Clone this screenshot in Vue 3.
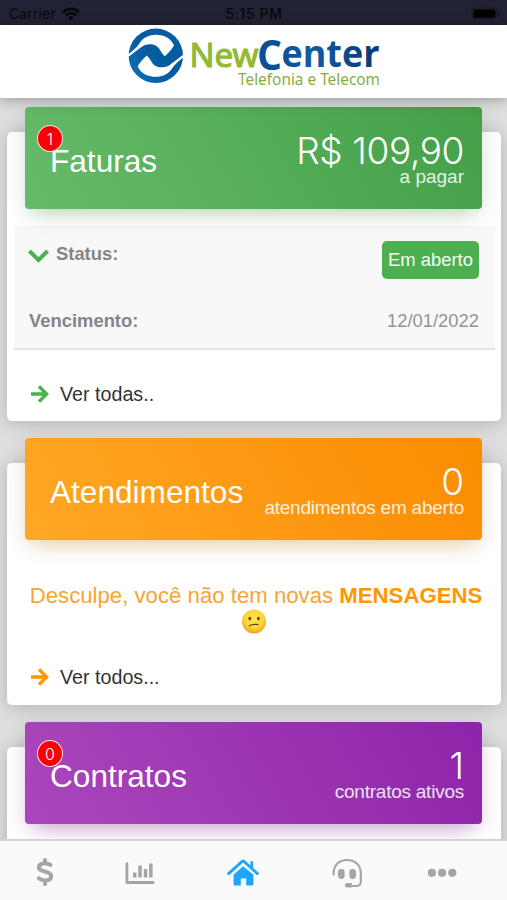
<template>
  <div class="screen">
    <div class="statusbar">
      <div class="carrier">
        <span>Carrier</span>
        <svg width="18" height="14" viewBox="0 0 18 14">
          <path d="M1 5.2a11.4 11.4 0 0 1 16 0" fill="none" stroke="#07070c" stroke-width="2.7" />
          <path d="M3.9 8.4a7.3 7.3 0 0 1 10.2 0" fill="none" stroke="#07070c" stroke-width="2.5" />
          <path d="M9 13.4 6.2 10.6a4 4 0 0 1 5.6 0z" fill="#07070c" />
        </svg>
      </div>
      <span class="time">5:15 PM</span>
      <svg class="battery" width="30" height="14" viewBox="0 0 30 14">
        <rect x="1" y="1" width="25" height="11" rx="3" fill="none" stroke="#14141f" />
        <rect x="2.5" y="2.4" width="22" height="8.3" rx="1.6" fill="#000" />
        <path d="M27.5 4.6v4q1.4-.6 1.4-2t-1.4-2z" fill="#14141f" />
      </svg>
    </div>

    <header class="header">
      <svg class="logo" width="260" height="72" viewBox="124 25 260 72">
        <defs>
          <linearGradient id="globe" x1="0" y1="1" x2="1" y2="0">
            <stop offset="0" stop-color="#0d74bb" />
            <stop offset="0.5" stop-color="#045b9f" />
            <stop offset="1" stop-color="#0a5ca2" />
          </linearGradient>
          <linearGradient id="center" x1="0" y1="0" x2="1" y2="0">
            <stop offset="0" stop-color="#0b4f93" />
            <stop offset="0.3" stop-color="#0f5ea6" />
            <stop offset="1" stop-color="#0b3876" />
          </linearGradient>
          <path
            id="swoosh"
            d="M128 54.6C133 50.6 137 47 139.4 43.4C143 37.6 149 34.8 156 34.8C164.4 34.8 171.4 38.8 174 45.4C171.4 49.4 168.6 53 164.8 56.2C161.4 53.4 160 48.4 156.8 46.2C152.6 43.4 146.4 43.8 142.2 46.4C137.6 49.6 133 53.4 128 57Z"
            fill="#fff"
          />
        </defs>
        <circle cx="155.8" cy="55.8" r="27.2" fill="url(#globe)" />
        <use href="#swoosh" />
        <use href="#swoosh" transform="rotate(180 155.8 55.8)" />
        <text class="logo-new" x="189.5" y="67.4" textLength="69" lengthAdjust="spacingAndGlyphs">New</text>
        <text class="logo-c" x="257" y="69.8" textLength="25" lengthAdjust="spacingAndGlyphs">C</text>
        <text class="logo-enter" x="281.5" y="67.4" textLength="98" lengthAdjust="spacingAndGlyphs">enter</text>
        <text class="logo-sub" x="238" y="85.3" textLength="142" lengthAdjust="spacingAndGlyphs">Telefonia e Telecom</text>
      </svg>
    </header>

    <main class="content">
      <section class="card">
        <div class="banner green">
          <span class="badge">1</span>
          <h2>Faturas</h2>
          <div class="summary">
            <strong class="money">R$ 109,90</strong>
            <small>a pagar</small>
          </div>
        </div>
        <div class="invoice">
          <div class="row">
            <div class="label">
              <svg width="21" height="14" viewBox="0 0 21 14">
                <path d="M1.4 2 10.5 11l9.1-9" fill="none" stroke="#4caf50" stroke-width="4" />
              </svg>
              <span>Status:</span>
            </div>
            <span class="tag">Em aberto</span>
          </div>
          <div class="row">
            <span class="due">Vencimento:</span>
            <span class="date">12/01/2022</span>
          </div>
        </div>
        <a class="more more-green">
          <svg width="18" height="18" viewBox="0 0 18 18">
            <path d="M0 9h15M8 1.4 15.6 9 8 16.6" fill="none" stroke="currentColor" stroke-width="3.4" />
          </svg>
          <span>Ver todas..</span>
        </a>
      </section>

      <section class="card">
        <div class="banner orange">
          <h2>Atendimentos</h2>
          <div class="summary">
            <strong>0</strong>
            <small class="long">atendimentos em aberto</small>
          </div>
        </div>
        <div class="empty">
          <p>Desculpe, você não tem novas <b>MENSAGENS</b></p>
          <svg width="26" height="26" viewBox="0 0 26 26">
            <defs>
              <radialGradient id="face" cx="0.5" cy="0.4" r="0.6">
                <stop offset="0" stop-color="#ffe94e" />
                <stop offset="0.65" stop-color="#fdd33a" />
                <stop offset="1" stop-color="#ee9d20" />
              </radialGradient>
            </defs>
            <circle cx="13" cy="12.4" r="12" fill="url(#face)" />
            <ellipse cx="8.8" cy="9.6" rx="1.4" ry="1.8" fill="#63400c" />
            <ellipse cx="17.4" cy="9.6" rx="1.4" ry="1.8" fill="#63400c" />
            <path d="M8.4 16.8q3.6-2.2 8.6-1.2" fill="none" stroke="#63400c" stroke-width="1.3" stroke-linecap="round" />
          </svg>
        </div>
        <a class="more more-orange">
          <svg width="18" height="18" viewBox="0 0 18 18">
            <path d="M0 9h15M8 1.4 15.6 9 8 16.6" fill="none" stroke="currentColor" stroke-width="3.4" />
          </svg>
          <span>Ver todos...</span>
        </a>
      </section>

      <section class="card">
        <div class="banner purple">
          <span class="badge">0</span>
          <h2>Contratos</h2>
          <div class="summary">
            <strong>1</strong>
            <small class="long">contratos ativos</small>
          </div>
        </div>
      </section>
    </main>

    <nav class="tabbar">
      <a v-for="tab in tabs" :key="tab.name" :class="{ active: tab.name === current }" @click="current = tab.name">
        <svg width="34" height="32" viewBox="0 0 34 32">
          <path v-if="tab.fill" :d="tab.fill" fill="currentColor" />
          <path
            v-if="tab.line"
            :d="tab.line"
            fill="none"
            stroke="currentColor"
            :stroke-width="tab.width"
            stroke-linecap="round"
            stroke-linejoin="round"
          />
        </svg>
      </a>
    </nav>
  </div>
</template>

<script setup>
import { ref } from "vue";

const current = ref("home");

const tabs = [
  {
    name: "faturas",
    line: "M22.6 8.8C20.3 7.8 18 7.4 15.8 7.6 9.8 8 9.6 13.2 14 14.6l5.6 1.8C25 18.4 24 24.2 17.8 24.4 15 24.5 12.6 23.6 10.8 22.4M17 4v3M17 25v3",
    width: 4,
  },
  {
    name: "consumo",
    fill: "M10 16.4h3.5v5.2H10zM15.3 9.4h3.5v12.2h-3.5zM20.8 13h3.5v8.6h-3.5zM26.1 7.6h3.5v14h-3.5z",
    line: "M3.9 7.6v18.9h26.2",
    width: 2.8,
  },
  {
    name: "home",
    fill: "M17 10.2 27.4 18.8V28.6q0 .8-.8.8h-6.4v-7h-5.4v7H8.4q-.8 0-.8-.8V18.8z",
    line: "M2.6 17.6 16.2 5.4q.9-.7 1.8 0L31.4 17.6M25.8 11V6.4",
    width: 2.8,
  },
  {
    name: "suporte",
    fill: "M11.6 13q3 0 3 3v4q0 3-3 3h-.8q-2.8-.6-2.8-3v-4q0-2.6 2.8-3zM22.4 13h.8q2.8.4 2.8 3v4q0 2.4-2.8 3h-.8q-3-.2-3-3v-4q0-2.8 3-3zM17.2 27h4.6v4.6h-4.6q-2.4-.2-2.4-2.3t2.4-2.3z",
    line: "M3.6 18.4v-1.6C3.8 9 9.4 4 17 4S30.8 9 30.8 17v8.6q0 4.4-4 4.4H20",
    width: 2.1,
  },
  {
    name: "mais",
    fill: "M2.8 16.8a4.1 4.1 0 1 0 8.2 0a4.1 4.1 0 1 0-8.2 0M13 16.8a4.1 4.1 0 1 0 8.2 0a4.1 4.1 0 1 0-8.2 0M23.2 16.8a4.1 4.1 0 1 0 8.2 0a4.1 4.1 0 1 0-8.2 0",
  },
];
</script>

<style>
body {
  margin: 0;
}
</style>

<style scoped>
.screen {
  display: flex;
  flex-direction: column;
  width: 507px;
  height: 900px;
  overflow: hidden;
  background: #dedede;
  font-family: "Liberation Sans", Arial, sans-serif;
}

.statusbar {
  display: grid;
  grid-template-columns: 1fr auto 1fr;
  align-items: center;
  flex: none;
  height: 25px;
  padding: 2px 6px 0 9px;
  box-sizing: border-box;
  background: #222235;
  color: #07070c;
  font-family: Inter, "Liberation Sans", sans-serif;
  font-size: 14px;
}

.carrier {
  display: flex;
  align-items: center;
  gap: 6px;
  letter-spacing: 0.1px;
}

.time {
  margin-right: 2px;
  font-weight: 500;
  letter-spacing: 0.6px;
}

.battery {
  justify-self: end;
}

.header {
  flex: none;
  height: 73px;
  text-align: center;
  background: #fff;
  box-shadow: 0 2px 12px rgba(0, 0, 0, 0.3);
  z-index: 1;
}

.logo-new {
  font: 400 33.5px "Noto Sans", sans-serif;
  fill: #93b931;
  stroke: #93b931;
  stroke-width: 1.1px;
}

.logo-c {
  font: 700 41px "Open Sans", sans-serif;
  fill: #0b4f93;
}

.logo-enter {
  font: 700 38px "Open Sans", sans-serif;
  fill: url(#center);
}

.logo-sub {
  font: 400 15.5px "Noto Sans", sans-serif;
  fill: #86ad45;
}

.content {
  flex: 1;
  min-height: 0;
  padding: 34px 6px 0 7px;
}

.card {
  display: flow-root;
  height: 289px;
  margin-bottom: 42px;
  border-radius: 5px;
  background: #fff;
  box-shadow: 0 2px 18px rgba(0, 0, 0, 0.2);
}

.card + .card {
  height: 241.5px;
}

.banner {
  position: relative;
  display: flex;
  justify-content: space-between;
  height: 102px;
  margin: -25px 19px 0 18px;
  padding: 0 18px 0 25px;
  box-sizing: border-box;
  border-radius: 4px;
  color: #fff;
}

.green {
  background: linear-gradient(60deg, #66bb6a, #43a047);
  box-shadow: 0 12px 20px -10px rgba(76, 175, 80, 0.35), 0 4px 22px rgba(0, 0, 0, 0.1);
}

.orange {
  background: linear-gradient(60deg, #ffa726, #fb8c00);
  box-shadow: 0 12px 20px -10px rgba(255, 152, 0, 0.4), 0 4px 22px rgba(0, 0, 0, 0.1);
}

.purple {
  background: linear-gradient(60deg, #ab47bc, #8e24aa);
  box-shadow: 0 12px 20px -10px rgba(156, 39, 176, 0.4), 0 4px 22px rgba(0, 0, 0, 0.1);
}

.badge {
  position: absolute;
  left: 12px;
  top: 18px;
  width: 24px;
  height: 25px;
  border: 1.5px solid #ffe3dc;
  border-radius: 50%;
  background: #fb0007;
  font-family: Inter, sans-serif;
  font-weight: 300;
  font-size: 16px;
  line-height: 26px;
  text-align: center;
}

h2 {
  margin: 35px 0 0;
  font-size: 31.6px;
  line-height: 38px;
  font-weight: 400;
}

.summary {
  display: flex;
  flex-direction: column;
  align-items: flex-end;
}

.summary strong {
  margin-top: 25px;
  font-family: Inter, sans-serif;
  font-size: 37px;
  line-height: 38px;
  font-weight: 300;
}

.summary .money {
  letter-spacing: -0.4px;
}

.summary small {
  margin-top: -3px;
  font-size: 19px;
  line-height: 20px;
  opacity: 0.85;
}

.summary .long {
  letter-spacing: -0.24px;
}

.invoice {
  display: flex;
  flex-direction: column;
  gap: 30px;
  height: 124px;
  margin: 17px 6px 0 7px;
  padding: 15px 16px 0 15px;
  box-sizing: border-box;
  border-bottom: 2px solid #e4e4e4;
  background: #f8f8f8;
}

.row {
  display: flex;
  justify-content: space-between;
  color: #858585;
  font-size: 18.4px;
  line-height: 24px;
}

.label {
  display: flex;
  height: 24px;
  gap: 7px;
  margin-top: 1px;
  font-weight: 700;
}

.label svg {
  margin: 7px 0 0 -1px;
}

.row:first-child {
  height: 24px;
}

.due {
  margin-top: 14px;
  font-weight: 700;
}

.tag {
  width: 97px;
  height: 38px;
  border-radius: 5px;
  background: #4caf50;
  color: #f4fff4;
  line-height: 37px;
  text-align: center;
}

.date {
  margin-top: 14px;
  color: #939393;
}

.more {
  display: flex;
  align-items: center;
  gap: 11px;
  margin: 32px 0 0 24px;
  color: #4caf50;
  font-size: 19.7px;
  line-height: 24px;
}

.more span {
  color: #333;
}

.more-orange {
  margin-top: 30px;
  color: #ff9800;
}

.empty {
  display: flex;
  flex-direction: column;
  align-items: center;
  margin-top: 42px;
  color: #f9a435;
  font-size: 22.2px;
}

.empty p {
  margin: 0;
  padding-left: 4px;
  line-height: 27px;
  white-space: nowrap;
}

.empty b {
  color: #ff9800;
}

.tabbar {
  display: grid;
  grid-template-columns: 90px 100px 106px 102px 88px;
  justify-items: center;
  flex: none;
  height: 61px;
  padding-top: 15px;
  box-sizing: border-box;
  border-top: 2px solid #d2d2d2;
  background: #fafafa;
  color: #a5a5a5;
  z-index: 1;
}

.tabbar .active {
  color: #1ea5fc;
}
</style>
